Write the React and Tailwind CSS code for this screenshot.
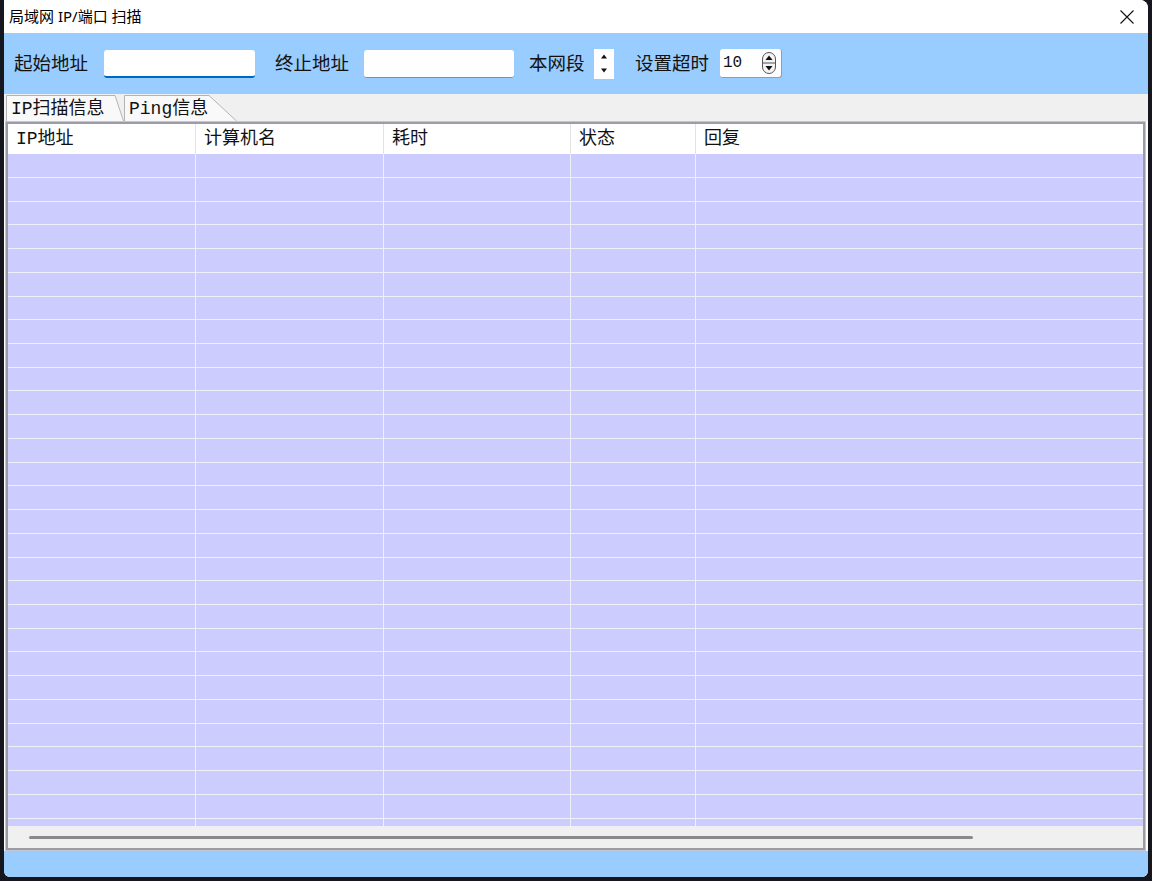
import React from "react";

const rowHeights = [24, 24, 23, 24, 24, 24, 23, 24, 24, 23, 24, 24, 24, 23, 24, 24, 24, 23, 24, 24, 23, 24, 24, 24, 23, 24, 24, 24, 24];

const columns = ["IP地址", "计算机名", "耗时", "状态", "回复"];

const SpinArrows = () => (
  <svg width="8" height="30" viewBox="0 0 8 30">
    <path d="M4 5.5 L7 9.5 L1 9.5 Z" fill="#111" />
    <path d="M4 23.5 L7 19.5 L1 19.5 Z" fill="#111" />
  </svg>
);

const RoundSpin = () => (
  <svg width="16" height="24" viewBox="0 0 16 24">
    <rect x="1.5" y="1.5" width="13" height="21" rx="6.5" fill="#f4f4f4" stroke="#555" />
    <line x1="1.5" y1="12" x2="14.5" y2="12" stroke="#555" />
    <path d="M8 4.5 L11.5 9 L4.5 9 Z" fill="#111" />
    <path d="M8 19.5 L11.5 15 L4.5 15 Z" fill="#111" />
  </svg>
);

const Tab = ({ label, width, slantStart }) => (
  <div className="relative h-[26px] flex items-center" style={{ width }}>
    <svg className="absolute inset-0" width={width} height="26" viewBox={`0 0 ${width} 26`}>
      <path
        d={`M0.5 26 L0.5 0.5 L${slantStart} 0.5 L${width - 0.5} 26`}
        fill="#f9f9f9"
        stroke="#b4b4b4"
      />
    </svg>
    <span className="relative pl-[5px] pt-[2px] text-[18px] leading-none text-[#111] font-['Liberation_Mono','Noto_Sans_CJK_SC',monospace]">
      {label}
    </span>
  </div>
);

export default function App() {
  return (
    <div className="w-[1152px] h-[881px] bg-[#15161e] overflow-hidden">
      <div className="ml-[4px] w-[1144px] h-[877px] flex flex-col bg-white rounded-tr-[8px] rounded-b-[6px] overflow-hidden font-['Noto_Sans','Noto_Sans_CJK_SC',sans-serif]">
        {/* title bar */}
        <div className="h-[33px] flex items-center justify-between pl-[5px] pr-[13px] bg-white">
          <span className="text-[15px] leading-none text-black">局域网 IP/端口 扫描</span>
          <svg width="16" height="16" viewBox="0 0 16 16">
            <path d="M1.5 1.5 L14.5 14.5 M14.5 1.5 L1.5 14.5" stroke="#111" strokeWidth="1.1" />
          </svg>
        </div>

        {/* toolbar */}
        <div className="h-[61px] bg-[#99ccff] flex items-center pl-[10px] text-[18.5px] leading-none text-[#111]">
          <span className="w-[90px]">起始地址</span>
          <div className="w-[151px] h-[28px] bg-white rounded-[3px] border-b-2 border-[#0067c0]" />
          <span className="ml-[20px] w-[89px]">终止地址</span>
          <div className="w-[150px] h-[28px] bg-white rounded-[3px] border-b border-[#8a8a8a]" />
          <span className="ml-[15px] w-[65px]">本网段</span>
          <div className="w-[20px] h-[30px] bg-white flex items-center justify-center">
            <SpinArrows />
          </div>
          <span className="ml-[21px] w-[85px]">设置超时</span>
          <div className="w-[62px] h-[29px] bg-white rounded-[3px] border-b border-r border-[#9a9a9a] flex items-center justify-between pl-[3px] pr-[4px]">
            <span className="text-[16px] font-['Liberation_Mono',monospace]">10</span>
            <RoundSpin />
          </div>
        </div>

        {/* tabs */}
        <div className="h-[27px] bg-[#f0f0f0] flex items-end pl-[2px]">
          <Tab label="IP扫描信息" width={118} slantStart={109} />
          <Tab label="Ping信息" width={113} slantStart={85} />
        </div>

        {/* list frame */}
        <div className="ml-[1px] w-[1141px] h-[730px] border border-[#c4c4d2] bg-[#f0f0f0]">
          <div className="h-full border-2 border-[#9c9ca8] flex flex-col">
            <div className="h-[30px] grid grid-cols-[188px_188px_187px_125px_1fr] bg-white text-[18px] leading-none text-[#111] font-['Liberation_Mono','Noto_Sans_CJK_SC',monospace]">
              {columns.map((c, i) => (
                <div key={c} className={`flex items-center pl-[8px] ${i < 4 ? "border-r border-[#e3e3e3]" : ""}`}>
                  {c}
                </div>
              ))}
            </div>
            <div className="h-[672px] overflow-hidden bg-[#ccccff]">
              {rowHeights.map((h, r) => (
                <div
                  key={r}
                  className={`grid grid-cols-[188px_188px_187px_125px_1fr] border-b border-[#f0f0fc] ${h === 24 ? "h-[24px]" : "h-[23px]"}`}
                >
                  {[0, 1, 2, 3, 4].map((c) => (
                    <div key={c} className={c < 4 ? "border-r border-[#f0f0fc]" : ""} />
                  ))}
                </div>
              ))}
            </div>
            <div className="h-[22px] bg-[#f0f0f0] flex items-center pl-[21px]">
              <div className="w-[944px] h-[3px] rounded-full bg-[#8a8a8a]" />
            </div>
          </div>
        </div>

        {/* bottom strip */}
        <div className="flex-1 bg-[#99ccff]" />
      </div>
    </div>
  );
}
